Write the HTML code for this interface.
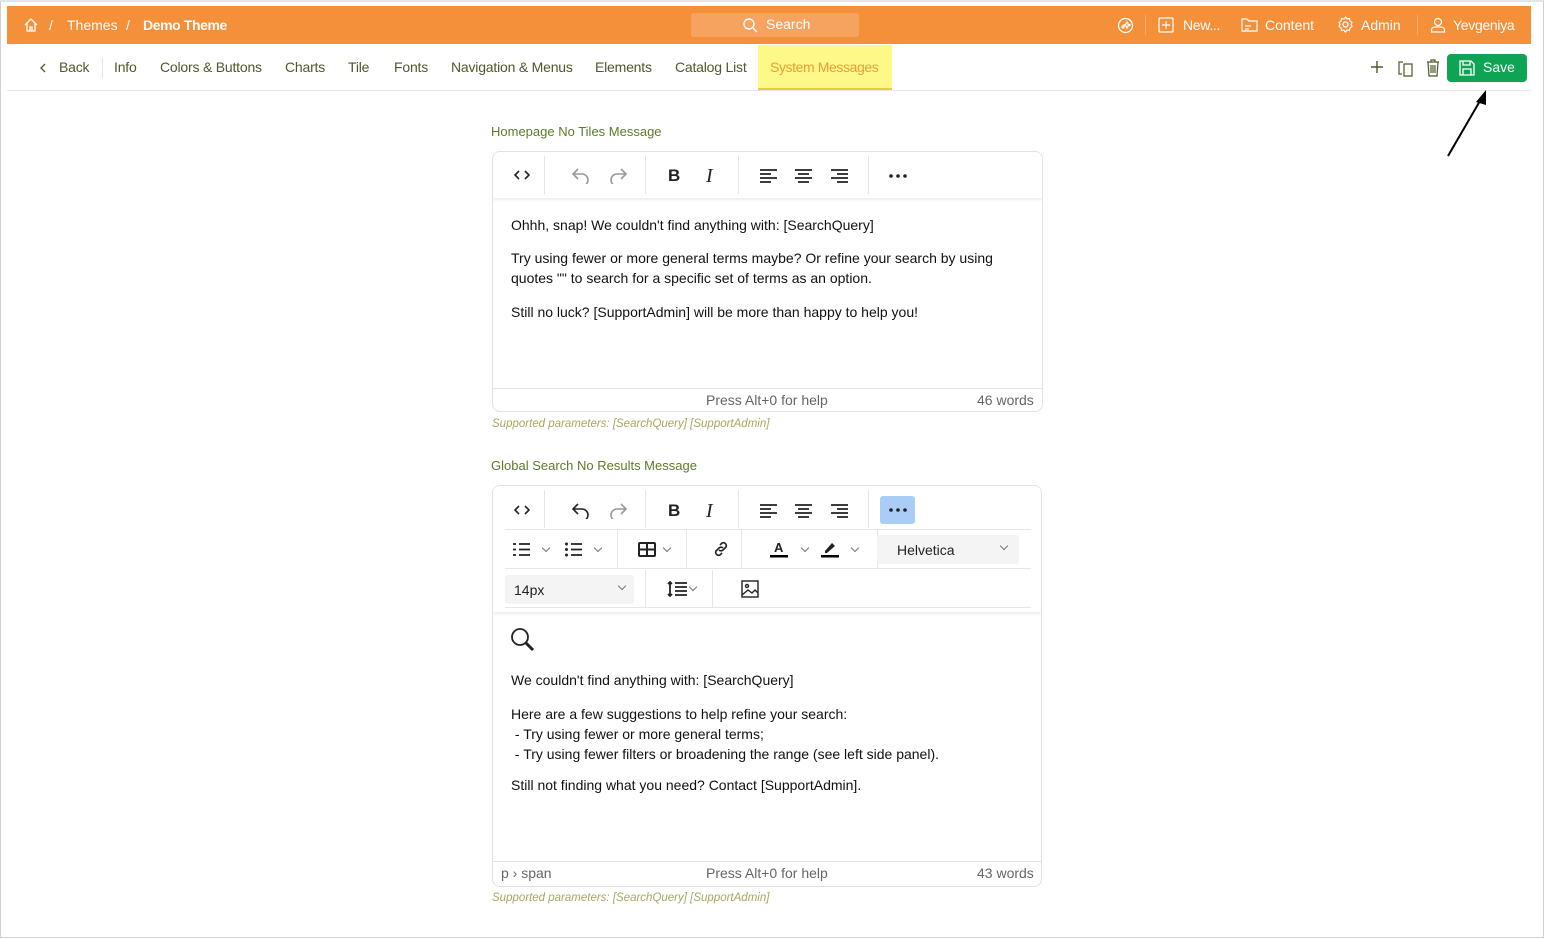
<!DOCTYPE html>
<html><head><meta charset="utf-8"><style>
*{box-sizing:border-box;margin:0;padding:0}
body{width:1544px;height:938px;background:#fff;font-family:"Liberation Sans",sans-serif;position:relative;overflow:hidden}
.frame{position:absolute;left:0;top:0;width:1544px;height:938px;border:1px solid #d0d0d0;border-top:2px solid #e6e6e6}
.top{position:absolute;left:7px;top:6px;width:1524px;height:38px;background:#f48f3a;color:#fff;font-size:14px}
.top span{position:absolute;top:11px}
.search{position:absolute;left:684px;top:7px;width:168px;height:24px;background:#f6a360;border-radius:3px}
.nav{position:absolute;left:7px;top:45px;width:1524px;height:46px;border-bottom:1px solid #e8e8e8;font-size:14px;color:#4c5a2c;letter-spacing:-0.2px}
.nav span{position:absolute;top:14px}
.sys{position:absolute;left:751px;top:0;width:134px;height:45px;background:#fdf888;border-bottom:2px solid #e3cf3a;color:#e8a03a;font-size:14px;padding:14px 0 0 12px}
.save{position:absolute;left:1447px;top:54px;width:80px;height:28px;background:#0ea453;border-radius:4px;color:#fff;font-size:14px}
.lbl{position:absolute;left:491px;font-size:13px;color:#5c7a2a}
.sp{position:absolute;left:492px;font-size:11.5px;font-style:italic;color:#a8a860}
.ed{position:absolute;left:492px;width:551px;border:1px solid #e2e2e2;border-radius:8px;overflow:hidden}
.tb{position:absolute;left:0;width:100%;height:46px;box-shadow:0 2px 3px rgba(0,0,0,.08);background:#fff}
.ic{position:absolute;font-size:17px;color:#222}
svg.i{position:absolute}
.sep{position:absolute;width:1px;background:#e6e6e6}
.txt{position:absolute;left:18px;font-size:14px;color:#111;line-height:20px}
.st{position:absolute;left:0;width:100%;height:24px;border-top:1px solid #e2e2e2;font-size:14px;color:#666}
.st span{position:absolute;top:3px}
.dd{position:absolute;background:#f4f4f4;border-radius:3px;font-size:14px;color:#222}
.chev{position:absolute;width:6px;height:6px;border-right:1.3px solid #777;border-bottom:1.3px solid #777;transform:rotate(45deg)}
</style></head><body>
<div class="frame"></div>
<div class="top">
<svg style="position:absolute;left:16px;top:11px" width="16" height="16" viewBox="0 0 16 16" fill="none" stroke="#fff" stroke-width="1.3"><path d="M2 8L8 2l6 6M4 6v8h8V6M7 14v-4h2v4"/></svg>
<span style="left:42px">/</span><span style="left:60px">Themes</span><span style="left:119px">/</span><span style="left:136px;font-weight:bold;letter-spacing:-0.4px">Demo Theme</span>
<div class="search"><svg style="position:absolute;left:51px;top:4px" width="16" height="16" viewBox="0 0 16 16" fill="none" stroke="#fff" stroke-width="1.4"><circle cx="7" cy="7" r="5"/><path d="M11 11l4 4"/></svg><span style="left:75px;top:3px">Search</span></div>
<svg style="position:absolute;left:1110px;top:11px" width="17" height="17" viewBox="0 0 17 17" fill="none" stroke="#fff" stroke-width="1.3"><circle cx="8.5" cy="8.5" r="7"/><circle cx="6" cy="10" r="1"/><path d="M10 5l1 2 2 1-2 1-1 2-1-2-2-1 2-1z"/></svg>
<div style="position:absolute;left:1138px;top:9px;width:1px;height:20px;background:#f7a968"></div>
<svg style="position:absolute;left:1151px;top:11px" width="16" height="16" viewBox="0 0 16 16" fill="none" stroke="#fff" stroke-width="1.2"><rect x="1" y="1" width="14" height="14" rx="1"/><path d="M8 4v8M4 8h8"/></svg>
<span style="left:1176px;letter-spacing:-0.3px">New...</span>
<svg style="position:absolute;left:1234px;top:11px" width="17" height="16" viewBox="0 0 17 16" fill="none" stroke="#fff" stroke-width="1.2"><path d="M1 2h5l2 2h8v10H1z M4 9h6M4 12h4"/></svg>
<span style="left:1258px">Content</span>
<svg style="position:absolute;left:1330px;top:10px" width="17" height="17" viewBox="0 0 17 17" fill="none" stroke="#fff" stroke-width="1.2"><circle cx="8.5" cy="8.5" r="2.5"/><path d="M8.5 1l1.5 2 2.5-.5.5 2.5 2 1.5-1 2 1 2-2 1.5-.5 2.5-2.5-.5-1.5 2-1.5-2-2.5.5-.5-2.5-2-1.5 1-2-1-2 2-1.5.5-2.5 2.5.5z"/></svg>
<span style="left:1354px">Admin</span>
<div style="position:absolute;left:1410px;top:9px;width:1px;height:20px;background:#f7a968"></div>
<svg style="position:absolute;left:1423px;top:11px" width="16" height="16" viewBox="0 0 16 16" fill="none" stroke="#fff" stroke-width="1.2"><circle cx="8" cy="5" r="3.5"/><path d="M1.5 15v-2c0-2 2-3 4-3h5c2 0 4 1 4 3v2z"/></svg>
<span style="left:1446px;letter-spacing:-0.3px">Yevgeniya</span>
</div>
<div class="nav">
<svg style="position:absolute;left:32px;top:18px" width="8" height="10" viewBox="0 0 8 10" fill="none" stroke="#4c5a2c" stroke-width="1.3"><path d="M6 1L2 5l4 4"/></svg>
<span style="left:52px">Back</span>
<div style="position:absolute;left:95px;top:13px;width:1px;height:20px;background:#e4e4e4"></div>
<span style="left:107px">Info</span><span style="left:153px">Colors &amp; Buttons</span><span style="left:278px">Charts</span><span style="left:341px">Tile</span><span style="left:387px">Fonts</span><span style="left:444px">Navigation &amp; Menus</span><span style="left:588px">Elements</span><span style="left:668px">Catalog List</span>
<div class="sys" style="letter-spacing:-0.4px">System Messages</div>
<svg style="position:absolute;left:1363px;top:15px" width="14" height="14" viewBox="0 0 14 14" stroke="#4c5a2c" stroke-width="1.4"><path d="M7 1v12M1 7h12"/></svg>
<svg style="position:absolute;left:1390px;top:14px" width="17" height="18" viewBox="0 0 17 18" fill="none" stroke="#4c5a2c" stroke-width="1.2"><path d="M6 3H2v12h3M7 5h8v12H7z"/></svg>
<svg style="position:absolute;left:1419px;top:14px" width="14" height="18" viewBox="0 0 14 18" fill="none" stroke="#4c5a2c" stroke-width="1.2"><path d="M1 3h12M5 3V1h4v2M2 3l1 14h8l1-14M5 6v8M7 6v8M9 6v8"/></svg>
</div>
<div class="save"><svg style="position:absolute;left:12px;top:6px" width="16" height="16" viewBox="0 0 16 16" fill="none" stroke="#fff" stroke-width="1.3"><path d="M1 1h11l3 3v11H1z M4 1v4h7V1 M4 15v-6h8v6"/></svg><span style="position:absolute;left:36px;top:5px">Save</span></div>
<svg style="position:absolute;left:1440px;top:88px" width="50" height="72"><path d="M8 68L44 6" stroke="#000" stroke-width="2"/><path d="M46 2L36 14l10 3z" fill="#000"/></svg>

<div class="lbl" style="top:124px">Homepage No Tiles Message</div>
<div class="ed" style="top:151px;height:261px">
<div class="tb" style="top:0">
<svg class="i" style="left:21px;top:18px" width="16" height="10" viewBox="0 0 16 10" fill="none" stroke="#222" stroke-width="1.6"><path d="M5 1L1 5l4 4M11 1l4 4-4 4"/></svg>
<div class="sep" style="left:51px;top:4px;height:38px"></div>
<svg class="i" style="left:79px;top:16px" width="18" height="16" viewBox="0 0 18 16" fill="none" stroke="#999" stroke-width="1.6"><path d="M6 1L1 6l5 5M1 6h9a6 6 0 010 12"/></svg>
<svg class="i" style="left:116px;top:16px" width="18" height="16" viewBox="0 0 18 16" fill="none" stroke="#999" stroke-width="1.6"><path d="M12 1l5 5-5 5M17 6H8a6 6 0 000 12"/></svg>
<div class="sep" style="left:152px;top:4px;height:38px"></div>
<span class="ic" style="left:175px;top:14px;font-weight:bold">B</span><span class="ic" style="left:213px;top:13px;font-style:italic;font-family:'Liberation Serif',serif;font-size:20px">I</span>
<div class="sep" style="left:245px;top:4px;height:38px"></div>
<svg class="i" style="left:267px;top:17px" width="17" height="14" stroke="#222" stroke-width="1.7"><path d="M0 1h17M0 5h11M0 9h17M0 13h11"/></svg>
<svg class="i" style="left:302px;top:17px" width="17" height="14" stroke="#222" stroke-width="1.7"><path d="M0 1h17M3 5h11M0 9h17M3 13h11"/></svg>
<svg class="i" style="left:338px;top:17px" width="17" height="14" stroke="#222" stroke-width="1.7"><path d="M0 1h17M6 5h11M0 9h17M6 13h11"/></svg>
<div class="sep" style="left:375px;top:4px;height:38px"></div>
<svg class="i" style="left:396px;top:22px" width="18" height="4" fill="#222"><circle cx="2" cy="2" r="1.8"/><circle cx="9" cy="2" r="1.8"/><circle cx="16" cy="2" r="1.8"/></svg>
</div>
<div class="txt" style="top:63px">Ohhh, snap! We couldn't find anything with: [SearchQuery]</div>
<div class="txt" style="top:96px">Try using fewer or more general terms maybe? Or refine your search by using<br>quotes "" to search for a specific set of terms as an option.</div>
<div class="txt" style="top:150px">Still no luck? [SupportAdmin] will be more than happy to help you!</div>
<div class="st" style="top:236px"><span style="left:213px">Press Alt+0 for help</span><span style="left:484px">46 words</span></div>
</div>
<div class="sp" style="top:418px">Supported parameters: [SearchQuery] [SupportAdmin]</div>

<div class="lbl" style="top:458px">Global Search No Results Message</div>
<div class="ed" style="top:485px;height:402px;width:550px">
<div class="tb" style="top:0;height:126px">
<svg class="i" style="left:21px;top:19px" width="16" height="10" viewBox="0 0 16 10" fill="none" stroke="#222" stroke-width="1.6"><path d="M5 1L1 5l4 4M11 1l4 4-4 4"/></svg>
<div class="sep" style="left:51px;top:4px;height:38px"></div>
<svg class="i" style="left:79px;top:17px" width="18" height="16" viewBox="0 0 18 16" fill="none" stroke="#222" stroke-width="1.6"><path d="M6 1L1 6l5 5M1 6h9a6 6 0 010 12"/></svg>
<svg class="i" style="left:116px;top:17px" width="18" height="16" viewBox="0 0 18 16" fill="none" stroke="#999" stroke-width="1.6"><path d="M12 1l5 5-5 5M17 6H8a6 6 0 000 12"/></svg>
<div class="sep" style="left:152px;top:4px;height:38px"></div>
<span class="ic" style="left:175px;top:15px;font-weight:bold">B</span><span class="ic" style="left:213px;top:14px;font-style:italic;font-family:'Liberation Serif',serif;font-size:20px">I</span>
<div class="sep" style="left:245px;top:4px;height:38px"></div>
<svg class="i" style="left:267px;top:18px" width="17" height="14" stroke="#222" stroke-width="1.7"><path d="M0 1h17M0 5h11M0 9h17M0 13h11"/></svg>
<svg class="i" style="left:302px;top:18px" width="17" height="14" stroke="#222" stroke-width="1.7"><path d="M0 1h17M3 5h11M0 9h17M3 13h11"/></svg>
<svg class="i" style="left:338px;top:18px" width="17" height="14" stroke="#222" stroke-width="1.7"><path d="M0 1h17M6 5h11M0 9h17M6 13h11"/></svg>
<div class="sep" style="left:375px;top:4px;height:38px"></div>
<div style="position:absolute;left:387px;top:10px;width:35px;height:28px;background:#a9cdf6;border-radius:3px"></div>
<svg class="i" style="left:396px;top:22px" width="18" height="4" fill="#222"><circle cx="2" cy="2" r="1.8"/><circle cx="9" cy="2" r="1.8"/><circle cx="16" cy="2" r="1.8"/></svg>
<div style="position:absolute;left:12px;top:43px;width:526px;height:1px;background:#e6e6e6"></div>
<svg class="i" style="left:20px;top:56px" width="17" height="15" stroke="#222" stroke-width="1.8"><path d="M6 2h11M6 7.5h11M6 13h11M0 2h3M0 7.5h3M0 13h3"/></svg>
<div class="chev" style="left:50px;top:59px"></div>
<svg class="i" style="left:72px;top:56px" width="17" height="15" stroke="#222" stroke-width="1.8"><path d="M6 2h11M6 7.5h11M6 13h11"/><g fill="#222" stroke="none"><circle cx="1.5" cy="2" r="1.5"/><circle cx="1.5" cy="7.5" r="1.5"/><circle cx="1.5" cy="13" r="1.5"/></g></svg>
<div class="chev" style="left:102px;top:59px"></div>
<div class="sep" style="left:124px;top:44px;height:38px"></div>
<svg class="i" style="left:145px;top:56px" width="18" height="15" fill="none" stroke="#222" stroke-width="2"><rect x="1" y="1" width="16" height="13" rx="1"/><path d="M1 7.5h16M9 1v13"/></svg>
<div class="chev" style="left:171px;top:59px"></div>
<div class="sep" style="left:193px;top:44px;height:38px"></div>
<svg class="i" style="left:219px;top:54px" width="18" height="18" viewBox="0 0 18 18" fill="none" stroke="#222" stroke-width="1.6"><path d="M8 5l2-2a3 3 0 014 4l-3 3a3 3 0 01-4 0M10 13l-2 2a3 3 0 01-4-4l3-3a3 3 0 014 0"/></svg>
<div class="sep" style="left:248px;top:44px;height:38px"></div>
<svg class="i" style="left:277px;top:54px" width="18" height="18" viewBox="0 0 18 18"><text x="4" y="12" font-family="Liberation Sans" font-size="13" font-weight="bold" fill="#222">A</text><rect x="0" y="15" width="18" height="2.5" fill="#000"/></svg>
<div class="chev" style="left:309px;top:59px"></div>
<svg class="i" style="left:328px;top:54px" width="18" height="18" viewBox="0 0 18 18"><path d="M4 11l7-8 3 3-8 7H4z" fill="#222"/><rect x="0" y="15" width="18" height="2.5" fill="#000"/></svg>
<div class="chev" style="left:359px;top:59px"></div>
<div class="sep" style="left:384px;top:44px;height:38px"></div>
<div class="dd" style="left:384px;top:49px;width:142px;height:29px;padding:7px 0 0 20px">Helvetica<div class="chev" style="right:12px;top:8px"></div></div>
<div style="position:absolute;left:12px;top:82px;width:526px;height:1px;background:#e6e6e6"></div>
<div class="dd" style="left:12px;top:89px;width:129px;height:29px;padding:7px 0 0 9px">14px<div class="chev" style="right:9px;top:8px"></div></div>
<div class="sep" style="left:152px;top:84px;height:38px"></div>
<svg class="i" style="left:174px;top:95px" width="22" height="16" fill="none" stroke="#222" stroke-width="1.8"><path d="M3 1v14M1 3l2-2 2 2M1 13l2 2 2-2M8 2h12M8 6h12M8 10h12M8 14h12"/></svg>
<div class="chev" style="left:197px;top:98px"></div>
<div class="sep" style="left:219px;top:84px;height:38px"></div>
<svg class="i" style="left:248px;top:94px" width="18" height="18" viewBox="0 0 18 18" fill="none" stroke="#222" stroke-width="1.4"><rect x="1" y="1" width="16" height="16"/><circle cx="6" cy="6" r="1.5"/><path d="M1 15l6-5 4 3 3-3 3 3"/></svg>
<div style="position:absolute;left:12px;top:121px;width:526px;height:1px;background:#e6e6e6"></div>
</div>
<svg style="position:absolute;left:17px;top:141px" width="26" height="26" viewBox="0 0 26 26" fill="none" stroke="#222" stroke-width="1.8"><circle cx="10" cy="10" r="8"/><path d="M16 16l7 7" stroke-width="3"/></svg>
<div class="txt" style="top:184px">We couldn't find anything with: [SearchQuery]</div>
<div class="txt" style="top:218px">Here are a few suggestions to help refine your search:<br>&nbsp;- Try using fewer or more general terms;<br>&nbsp;- Try using fewer filters or broadening the range (see left side panel).</div>
<div class="txt" style="top:289px">Still not finding what you need? Contact [SupportAdmin].</div>
<div class="st" style="top:375px"><span style="left:8px">p › span</span><span style="left:213px">Press Alt+0 for help</span><span style="left:484px">43 words</span></div>
</div>
<div class="sp" style="top:892px">Supported parameters: [SearchQuery] [SupportAdmin]</div>
</body></html>
